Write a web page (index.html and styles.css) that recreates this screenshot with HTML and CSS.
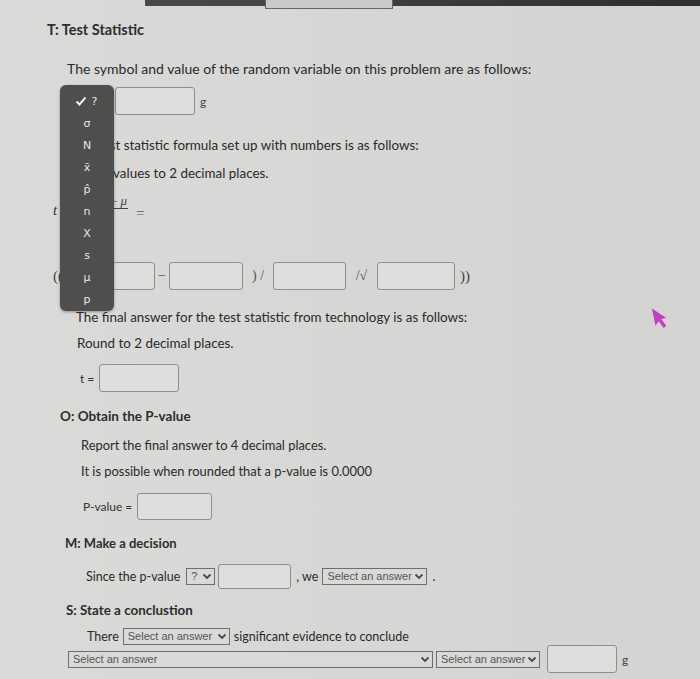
FILE: index.html
```html
<!DOCTYPE html>
<html>
<head>
<meta charset="utf-8">
<link rel="stylesheet" href="styles.css">
</head>
<body>
<div class="page">
  <div class="topbar"><div class="topbar-box"></div></div>

  <div class="row h20 r-t-head"><span class="head head-t">T: Test Statistic</span></div>
  <div class="row h20 r-t-intro">The symbol and value of the random variable on this problem are as follows:</div>
  <div class="row h30 r-symbol">
    <span class="sel sel-hidden">?</span>
    <input class="inp w80" type="text">
    <span class="unit">g</span>
  </div>
  <div class="row h20 r-formula1 sec-t">The test statistic formula set up with numbers is as follows:</div>
  <div class="row h20 r-formula2 sec-t">Round values to 2 decimal places.</div>
  <div class="row h30 r-fraction">
    <span class="math-t">t</span>
    <span class="frac">
      <span class="num">x̄ − <i>μ</i></span>
      <span class="den">s/√n</span>
    </span>
    <span class="eq">=</span>
  </div>
  <div class="row h30 r-plug">
    <span class="paren">((</span>
    <input class="inp w74 plug-first" type="text">
    <span class="op op-minus">−</span>
    <input class="inp w74" type="text">
    <span class="op op-div">) /</span>
    <input class="inp w73" type="text">
    <span class="op op-sqrt">/√</span>
    <input class="inp w78" type="text">
    <span class="paren paren-close">))</span>
  </div>
  <div class="row h20 r-final sec-t">The final answer for the test statistic from technology is as follows:</div>
  <div class="row h20 r-round sec-t">Round to 2 decimal places.</div>
  <div class="row h30 r-t">
    <span class="small-label">t =</span>
    <input class="inp w80" type="text">
  </div>

  <div class="row h20 r-o-head"><span class="head head-o">O: Obtain the P-value</span></div>
  <div class="row h20 r-report sec-o">Report the final answer to 4 decimal places.</div>
  <div class="row h20 r-possible sec-o">It is possible when rounded that a p-value is 0.0000</div>
  <div class="row h30 r-pvalue">
    <span class="small-label">P-value =</span>
    <input class="inp w75" type="text">
  </div>

  <div class="row h20 r-m-head"><span class="head head-m">M: Make a decision</span></div>
  <div class="row h30 r-since sec-ms">
    <span>Since the p-value</span>
    <span class="sel sel-q">?<svg class="chev" viewBox="0 0 10 7"><path d="M1.5 1.5 L5 5 L8.5 1.5"/></svg></span>
    <input class="inp w73 h25" type="text">
    <span class="comma-we">, we</span>
    <span class="sel sel-ans">Select an answer<svg class="chev" viewBox="0 0 10 7"><path d="M1.5 1.5 L5 5 L8.5 1.5"/></svg></span>
    <span class="dot">.</span>
  </div>

  <div class="row h20 r-s-head"><span class="head head-s">S: State a conclustion</span></div>
  <div class="row h18 r-there sec-ms">
    <span>There</span>
    <span class="sel sel-there">Select an answer<svg class="chev" viewBox="0 0 10 7"><path d="M1.5 1.5 L5 5 L8.5 1.5"/></svg></span>
    <span>significant evidence to conclude</span>
  </div>
  <div class="row h28 r-last">
    <span class="sel sel-wide">Select an answer<svg class="chev" viewBox="0 0 10 7"><path d="M1.5 1.5 L5 5 L8.5 1.5"/></svg></span>
    <span class="sel sel-ans2">Select an answer<svg class="chev" viewBox="0 0 10 7"><path d="M1.5 1.5 L5 5 L8.5 1.5"/></svg></span>
    <input class="inp w70" type="text">
    <span class="unit">g</span>
  </div>

  <ul class="menu">
    <li class="menu-item selected"><svg class="check" viewBox="0 0 12 10"><path d="M1.5 5.5 L4.5 8.5 L10.5 1.5"/></svg>?</li>
    <li class="menu-item">σ</li>
    <li class="menu-item">N</li>
    <li class="menu-item">x̄</li>
    <li class="menu-item">p̂</li>
    <li class="menu-item">n</li>
    <li class="menu-item">X</li>
    <li class="menu-item">s</li>
    <li class="menu-item">μ</li>
    <li class="menu-item">p</li>
  </ul>

  <svg class="cursor" viewBox="0 0 16 24"><path d="M2 1 L14 13 L9 13.5 L12.5 21 L9.5 22.5 L6 15 L2 18.5 Z"/></svg>
</div>
</body>
</html>
```

FILE: styles.css
```css
html, body {
  margin: 0;
  padding: 0;
}
body {
  background: #d6d6d4;
  font-family: Lato, "Open Sans", sans-serif;
  font-size: 14px;
  color: #2a2a2a;
}
.page {
  position: relative;
  width: 700px;
  height: 679px;
  overflow: hidden;
  background: linear-gradient(90deg, #dadad8 0%, #d6d6d4 60%, #d3d4d2 100%);
}
.topbar {
  margin-left: 145px;
  height: 6px;
  background: linear-gradient(90deg, #4a4a4a, #2e2e2e);
  position: relative;
}
.topbar-box {
  margin-left: 120px;
  width: 126px;
  height: 8px;
  border: 1px solid #666;
  border-top: none;
  background: #c9c9c7;
}
.row {
  display: flex;
  align-items: center;
  white-space: nowrap;
}
.h18 { height: 18px; }
.h20 { height: 20px; }
.h28 { height: 28px; }
.h30 { height: 30px; }

.sec-t { font-size: 13.4px; }
.sec-o { font-size: 12.9px; }
.sec-ms { font-size: 12.5px; }

.head {
  font-weight: 700;
  color: #2d2d2d;
}
.head-t { font-size: 14.5px; }
.head-o { font-size: 13.5px; }
.head-m { font-size: 13px; }
.head-s { font-size: 13.4px; }

.r-t-head { margin-top: 13px; padding-left: 47px; }
.r-t-intro { margin-top: 19px; padding-left: 67px; }
.r-symbol { margin-top: 8px; padding-left: 60px; }
.r-formula1 { margin-top: 19px; padding-left: 72px; }
.r-formula2 { margin-top: 8px; padding-left: 72px; }
.r-fraction { margin-top: 12px; padding-left: 53px; }
.r-plug { margin-top: 36px; padding-left: 53px; }
.r-final { margin-top: 16px; padding-left: 76px; }
.r-round { margin-top: 6px; padding-left: 77px; }
.r-t { margin-top: 10px; padding-left: 80px; }
.r-o-head { margin-top: 13px; padding-left: 60px; }
.r-report { margin-top: 9px; padding-left: 81px; }
.r-possible { margin-top: 6px; padding-left: 81px; }
.r-pvalue { margin-top: 10px; padding-left: 83px; }
.r-m-head { margin-top: 12px; padding-left: 65px; }
.r-since { margin-top: 8px; padding-left: 86px; }
.r-s-head { margin-top: 9px; padding-left: 66px; }
.r-there { margin-top: 7px; padding-left: 87px; }
.r-last { margin-top: 0; padding-left: 68px; }

.inp {
  box-sizing: border-box;
  height: 28px;
  border: 1px solid #8e8e8c;
  border-radius: 3px;
  background: #dededc;
  margin: 0;
  padding: 0;
}
.w70 { width: 70px; }
.w73 { width: 73px; }
.w74 { width: 74px; }
.w75 { width: 75px; height: 27px; }
.w78 { width: 78px; }
.w80 { width: 80px; }
.h25 { height: 25px; }

.unit {
  margin-left: 5px;
  font-size: 12px;
  color: #444;
}

.sel {
  box-sizing: border-box;
  display: inline-flex;
  align-items: center;
  justify-content: space-between;
  height: 17px;
  border: 1px solid #6e6e6e;
  background: #d9d9d7;
  font-family: "Liberation Sans", Arial, sans-serif;
  font-size: 11px;
  color: #555;
  padding: 0 2px 0 4px;
  flex-shrink: 0;
}
.chev {
  flex-shrink: 0;
  width: 10px;
  height: 7px;
  margin-left: 2px;
  fill: none;
  stroke: #4a4a4a;
  stroke-width: 1.8;
}
.sel-hidden { width: 52px; margin-right: 3px; }
.sel-q { width: 29px; margin-left: 6px; margin-right: 3px; }
.comma-we { margin-left: 5px; margin-right: 4px; }
.sel-ans { width: 105px; }
.dot { margin-left: 5px; }
.sel-there { width: 107px; margin: 0 4px 0 4px; }
.sel-wide { width: 365px; }
.sel-ans2 { width: 104px; margin-left: 3px; margin-right: 7px; }

.math-t {
  font-family: "Liberation Serif", serif;
  font-style: italic;
  font-size: 15px;
  color: #333;
  width: 15px;
}
.frac {
  display: inline-flex;
  flex-direction: column;
  align-items: flex-end;
  width: 60px;
  margin-top: -4px;
  font-family: "Liberation Serif", serif;
  font-size: 12px;
  color: #444;
}
.num {
  border-bottom: 1px solid #444;
  padding: 0 1px 1px 10px;
  line-height: 12px;
}
.num i { font-size: 13px; }
.den {
  align-self: center;
  line-height: 13px;
}
.eq {
  margin-left: 8px;
  font-family: "Liberation Serif", serif;
  font-size: 15px;
  color: #555;
  margin-top: 6px;
}

.paren {
  font-family: "Liberation Serif", serif;
  font-size: 15px;
  color: #444;
}
.plug-first { margin-left: 18px; }
.op {
  font-family: "Liberation Serif", serif;
  font-size: 14px;
  color: #555;
  text-align: center;
}
.op-minus { width: 14px; }
.op-div { width: 30px; }
.op-sqrt { width: 31px; }
.paren-close { margin-left: 5px; }

.small-label {
  font-size: 12px;
  color: #333;
  margin-right: 5px;
}

.menu {
  position: absolute;
  left: 60px;
  top: 85px;
  width: 54px;
  height: 226px;
  margin: 0;
  padding: 5px 0 0 0;
  box-sizing: border-box;
  list-style: none;
  background: #4e4e4d;
  border-radius: 6px;
  box-shadow: 0 1px 3px rgba(0,0,0,0.35);
}
.menu-item {
  height: 22px;
  display: flex;
  align-items: center;
  justify-content: center;
  font-family: "DejaVu Sans", sans-serif;
  font-size: 11px;
  color: #e8e8e8;
}
.menu-item.selected {
  padding-right: 2px;
}
.check {
  width: 12px;
  height: 10px;
  margin-right: 5px;
  fill: none;
  stroke: #f0f0f0;
  stroke-width: 2;
}

.cursor {
  position: absolute;
  left: 652px;
  top: 306px;
  width: 16px;
  height: 24px;
  fill: #c23fc2;
  transform: rotate(-12deg);
}
```
